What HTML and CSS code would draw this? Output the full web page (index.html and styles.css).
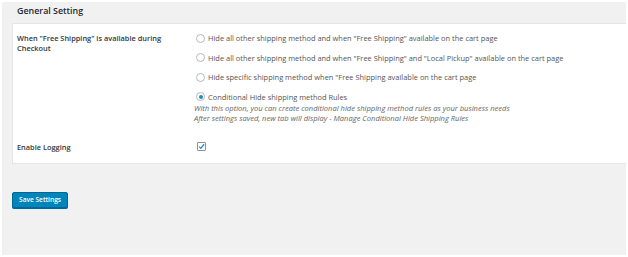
FILE: index.html
```html
<!DOCTYPE html>
<html>
<head>
<meta charset="utf-8">
<link rel="stylesheet" href="styles.css">
</head>
<body>
<div class="page">
  <h2 class="title">General Setting</h2>
  <div class="panel">
    <div class="row">
      <div class="label">When "Free Shipping" is available during Checkout</div>
      <div class="field">
        <label class="opt"><span class="radio"></span>Hide all other shipping method and when "Free Shipping" available on the cart page</label>
        <label class="opt"><span class="radio"></span>Hide all other shipping method and when "Free Shipping" and "Local Pickup" available on the cart page</label>
        <label class="opt"><span class="radio"></span>Hide specific shipping method when "Free Shipping available on the cart page</label>
        <label class="opt opt-last"><span class="radio checked"></span>Conditional Hide shipping method Rules</label>
        <p class="desc">With this option, you can create conditional hide shipping method rules as your business needs<br>After settings saved, new tab will display - Manage Conditional Hide Shipping Rules</p>
      </div>
    </div>
    <div class="row row-log">
      <div class="label">Enable Logging</div>
      <div class="field">
        <span class="check"><svg viewBox="0 0 8 8" width="7" height="7"><path d="M1.3 4.1 L3.2 6.1 L7 1.4" fill="none" stroke="#1e8cbe" stroke-width="1.5"/></svg></span>
      </div>
    </div>
  </div>
  <div class="actions">
    <button class="btn">Save Settings</button>
  </div>
</div>
</body>
</html>
```
FILE: styles.css
```css
html, body {
  margin: 0;
  padding: 0;
  background: #ffffff;
}
body {
  padding: 2px 2px 2px 2px;
  font-family: "Open Sans", "Noto Sans", sans-serif;
  color: #444;
}
.page {
  background: #f1f1f1;
  height: 253px;
  box-sizing: border-box;
}
.title {
  margin: 0;
  height: 21px;
  padding-left: 15px;
  font-size: 8.9px;
  font-weight: 600;
  line-height: 18px;
  color: #23282d;
}
.panel {
  margin-left: 10px;
  background: #fff;
  border: 1px solid #e5e5e5;
  border-right: 0;
  height: 141px;
  box-sizing: border-box;
  padding-top: 9px;
}
.row {
  display: flex;
}
.label {
  width: 150px;
  padding-left: 4px;
  margin-right: 29px;
  font-size: 7.4px;
  font-weight: 600;
  line-height: 10px;
  color: #32373c;
}
.field {
  flex: 1;
}
.opt {
  display: flex;
  align-items: center;
  height: 10px;
  margin-bottom: 9.5px;
  font-size: 7.45px;
  color: #555;
  white-space: nowrap;
}
.opt-last {
  margin-bottom: 0;
}
.radio {
  width: 7px;
  height: 7px;
  border: 1px solid #b4b9be;
  border-radius: 50%;
  margin-right: 3px;
  flex: none;
  display: flex;
  align-items: center;
  justify-content: center;
  background: #fff;
}
.radio.checked::before {
  content: "";
  width: 4px;
  height: 4px;
  border-radius: 50%;
  background: #1e8cbe;
}
.desc {
  margin: 1px 0 0 -2px;
  font-size: 7.55px;
  font-style: italic;
  line-height: 10px;
  color: #666;
}
.row-log {
  margin-top: 19px;
  align-items: center;
}
.check {
  display: flex;
  align-items: center;
  justify-content: center;
  width: 7px;
  height: 7px;
  border: 1px solid #8c9196;
  background: #fff;
  border-radius: 1px;
  margin-left: 1px;
}
.actions {
  padding: 21px 0 0 10px;
}
.btn {
  height: 16px;
  padding: 0 6px;
  background: #0085ba;
  border: 1px solid #006799;
  border-radius: 2px;
  color: #fff;
  font-family: "Open Sans", "Noto Sans", sans-serif;
  font-size: 6.6px;
  font-weight: 600;
  box-shadow: 0 1px 0 #006799;
  line-height: 14px;
}
```
